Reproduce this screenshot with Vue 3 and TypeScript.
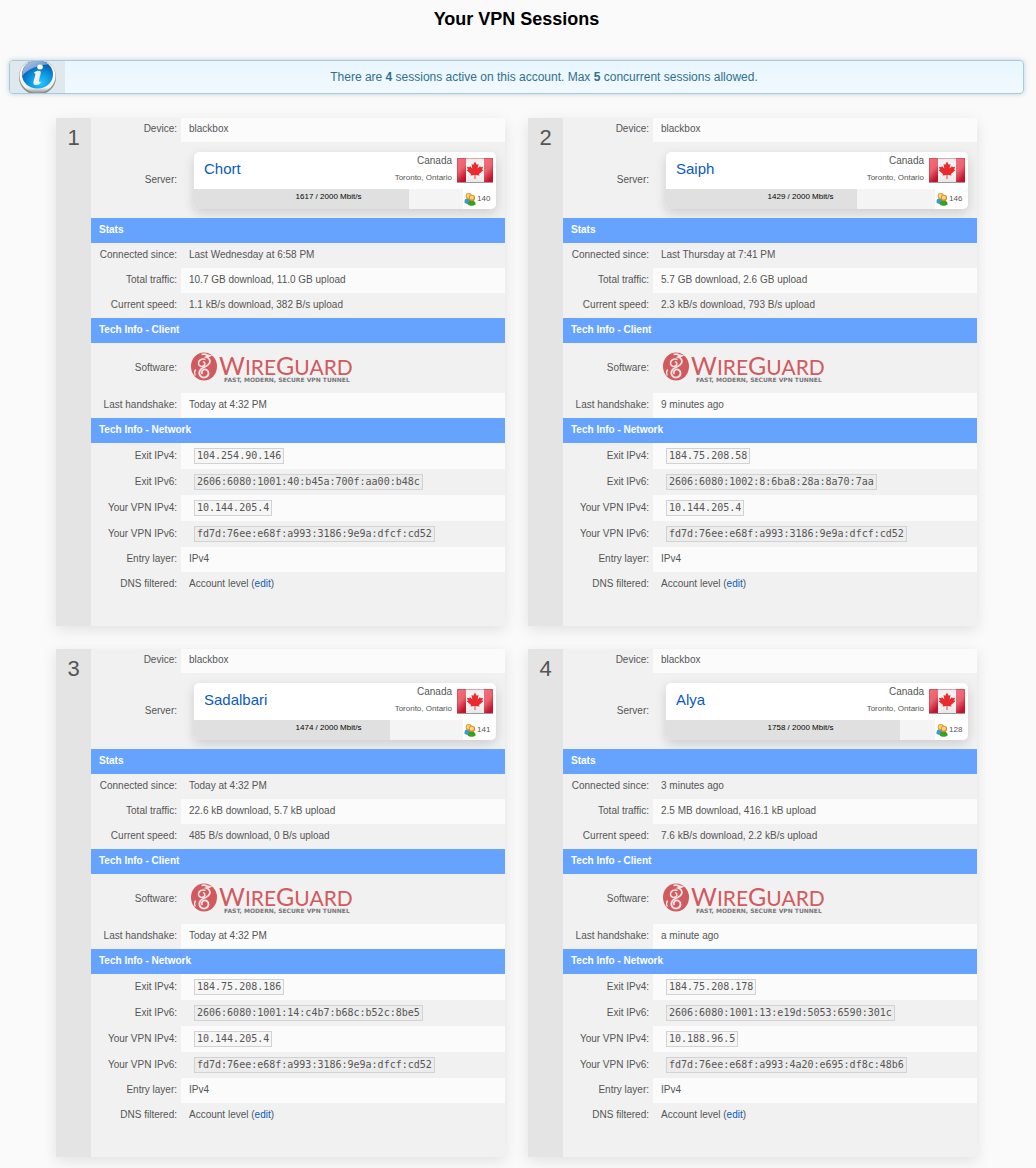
<script setup lang="ts">
interface Session {
  id: number
  server: string
  speed: number
  users: number
  connected: string
  traffic: string
  current: string
  handshake: string
  exit4: string
  exit6: string
  vpn4: string
  vpn6: string
}

const maxSpeed = 2000

const sessions: Session[] = [
  {
    id: 1, server: 'Chort', speed: 1617, users: 140,
    connected: 'Last Wednesday at 6:58 PM',
    traffic: '10.7 GB download, 11.0 GB upload',
    current: '1.1 kB/s download, 382 B/s upload',
    handshake: 'Today at 4:32 PM',
    exit4: '104.254.90.146', exit6: '2606:6080:1001:40:b45a:700f:aa00:b48c',
    vpn4: '10.144.205.4', vpn6: 'fd7d:76ee:e68f:a993:3186:9e9a:dfcf:cd52',
  },
  {
    id: 2, server: 'Saiph', speed: 1429, users: 146,
    connected: 'Last Thursday at 7:41 PM',
    traffic: '5.7 GB download, 2.6 GB upload',
    current: '2.3 kB/s download, 793 B/s upload',
    handshake: '9 minutes ago',
    exit4: '184.75.208.58', exit6: '2606:6080:1002:8:6ba8:28a:8a70:7aa',
    vpn4: '10.144.205.4', vpn6: 'fd7d:76ee:e68f:a993:3186:9e9a:dfcf:cd52',
  },
  {
    id: 3, server: 'Sadalbari', speed: 1474, users: 141,
    connected: 'Today at 4:32 PM',
    traffic: '22.6 kB download, 5.7 kB upload',
    current: '485 B/s download, 0 B/s upload',
    handshake: 'Today at 4:32 PM',
    exit4: '184.75.208.186', exit6: '2606:6080:1001:14:c4b7:b68c:b52c:8be5',
    vpn4: '10.144.205.4', vpn6: 'fd7d:76ee:e68f:a993:3186:9e9a:dfcf:cd52',
  },
  {
    id: 4, server: 'Alya', speed: 1758, users: 128,
    connected: '3 minutes ago',
    traffic: '2.5 MB download, 416.1 kB upload',
    current: '7.6 kB/s download, 2.2 kB/s upload',
    handshake: 'a minute ago',
    exit4: '184.75.208.178', exit6: '2606:6080:1001:13:e19d:5053:6590:301c',
    vpn4: '10.188.96.5', vpn6: 'fd7d:76ee:e68f:a993:4a20:e695:df8c:48b6',
  },
]

const load = (s: Session): number => Math.floor((s.speed / maxSpeed) * 100)
</script>

<template>
  <main class="page">
    <h1 class="title">Your VPN Sessions</h1>

    <div class="notice">
      <div class="notice-icon">
        <svg width="38" height="36" viewBox="0 0 38 36" aria-hidden="true">
          <defs>
            <linearGradient id="ring" x1="0" y1="0" x2="0" y2="1">
              <stop offset="0" stop-color="#c4c7ca" />
              <stop offset="0.3" stop-color="#ffffff" />
              <stop offset="0.85" stop-color="#f0f0f0" />
              <stop offset="1" stop-color="#8d8d8d" />
            </linearGradient>
            <radialGradient id="orb" cx="0.6" cy="0.8" r="0.75">
              <stop offset="0" stop-color="#22c8ff" />
              <stop offset="0.5" stop-color="#0b93e0" />
              <stop offset="1" stop-color="#0a4fa0" />
            </radialGradient>
            <linearGradient id="gloss" x1="0" y1="0" x2="1" y2="1">
              <stop offset="0" stop-color="#dfe6f2" />
              <stop offset="1" stop-color="#3c78bc" />
            </linearGradient>
          </defs>
          <ellipse cx="18.500" cy="18" rx="18.500" ry="18" fill="#8a8e90" />
          <ellipse cx="18.500" cy="17" rx="18" ry="17" fill="url(#ring)" />
          <ellipse cx="18.500" cy="15.500" rx="15.500" ry="14" fill="url(#orb)" />
          <path d="M3.300 17C2.500 8 9.500 1.500 18.500 1.500c4 0 8 1.500 10.500 4C21 6 9 9 3.300 17z" fill="url(#gloss)" opacity="0.850" />
          <ellipse cx="21" cy="8" rx="2.800" ry="2.500" fill="#fff" />
          <path d="M15 13.500c2-1.800 5-2.300 6.500-1.300 1.300 1-1.800 8-1.400 10.300.200.800 1.400 0 1.900.200-.500 2.600-5 4.300-7 2.800-2-1.700 1.700-8.500 1.300-10.700-.200-.700-1.200-.300-1.300-1.300z" fill="#f0f0f0" />
        </svg>
      </div>
      <p class="notice-text">
        There are <strong>4</strong> sessions active on this account. Max <strong>5</strong> concurrent sessions allowed.
      </p>
    </div>

    <section class="sessions">
      <article v-for="s in sessions" :key="s.id" class="card">
        <div class="number">{{ s.id }}</div>
        <table class="info">
          <tbody>
            <tr class="light device-row">
              <th scope="row">Device:</th>
              <td>blackbox</td>
            </tr>
            <tr class="server-row">
              <th scope="row">Server:</th>
              <td>
                <div class="server">
                  <div class="server-top">
                    <a href="#" class="server-name">{{ s.server }}</a>
                    <div class="place">
                      <div class="country">Canada</div>
                      <div class="city">Toronto, Ontario</div>
                    </div>
                    <svg class="flag" width="36" height="25" viewBox="0 0 36 25" role="img" aria-label="Flag of Canada">
                      <defs>
                        <linearGradient :id="'red' + s.id" x1="0" y1="0" x2="0.4" y2="1">
                          <stop offset="0" stop-color="#f4707c" />
                          <stop offset="0.55" stop-color="#ea6470" />
                          <stop offset="1" stop-color="#c4142c" />
                        </linearGradient>
                        <linearGradient :id="'white' + s.id" x1="0" y1="0" x2="0" y2="1">
                          <stop offset="0" stop-color="#ececec" />
                          <stop offset="0.5" stop-color="#fafafa" />
                          <stop offset="1" stop-color="#e8e8e8" />
                        </linearGradient>
                      </defs>
                      <rect width="36" height="24" :fill="`url(#white${s.id})`" />
                      <rect width="9" height="24" :fill="`url(#red${s.id})`" />
                      <rect x="27" width="9" height="24" :fill="`url(#red${s.id})`" />
                      <path d="M.5 24V.5h35V24" fill="none" stroke="#b82034" stroke-opacity="0.350" />
                      <path d="M0 24.500h36" stroke="#999" />
                      <path d="M18 3.500l1.700 3.300 1.800-.9-.8 4.600 2.400-2.500.5 1.300 2.500-.5-.9 2.600 1.100.8-4.300 3.700.5 1.600-4.100-.6.100 4.100h-1l.1-4.100-4.100.6.500-1.600-4.300-3.700 1.100-.8-.9-2.600 2.500.5.500-1.300 2.400 2.500-.8-4.600 1.800.9z" fill="#ea2a2e" />
                    </svg>
                  </div>
                  <div class="server-bottom">
                    <div class="bar">
                      <div class="fill" :style="{ width: load(s) + '%' }"></div>
                      <span class="bar-text">{{ s.speed }} / {{ maxSpeed }} Mbit/s</span>
                    </div>
                    <div class="users">
                      <svg width="12" height="13" viewBox="0 0 12 13" aria-hidden="true">
                        <path d="M.4 9.500C.2 6.500 2 5 4 5.300c2 .2 2.500 2 2.300 5C4 11.500 1.500 11 .4 9.500z" fill="#3a9ad8" />
                        <circle cx="4.800" cy="3.200" r="3.100" fill="#e29a2c" />
                        <circle cx="4.600" cy="3" r="2.100" fill="#fbd27c" />
                        <path d="M3.800 11.500c-.2-3 1.700-4.500 4-4.300 2.700.2 4 2 3.800 4.300-2 1.600-6 1.700-7.800 0z" fill="#38a023" />
                        <circle cx="8" cy="4.900" r="3.100" fill="#d98a24" />
                        <circle cx="7.800" cy="4.600" r="2.100" fill="#ffd880" />
                      </svg>
                      <span>{{ s.users }}</span>
                    </div>
                  </div>
                </div>
              </td>
            </tr>
            <tr class="section"><th colspan="2">Stats</th></tr>
            <tr>
              <th scope="row">Connected since:</th>
              <td>{{ s.connected }}</td>
            </tr>
            <tr class="light">
              <th scope="row">Total traffic:</th>
              <td>{{ s.traffic }}</td>
            </tr>
            <tr>
              <th scope="row">Current speed:</th>
              <td>{{ s.current }}</td>
            </tr>
            <tr class="section"><th colspan="2">Tech Info - Client</th></tr>
            <tr class="software-row">
              <th scope="row">Software:</th>
              <td>
                <svg class="wireguard" width="180" height="42" viewBox="0 -4 180 42" role="img" aria-label="WireGuard">
                  <ellipse cx="15" cy="15.500" rx="13" ry="14" fill="#d15a5e" />
                  <path d="M12.500 3.500c2.500-.8 4-.5 5.500.7l3 .6c-1.500.8-3 .7-4 1.200 2.500.8 4.300 2.600 3.800 5.200-.6 3-3.600 4-6.300 5.300-4.500 2-5.500 6.500-2.500 9 3 2.200 7.500.5 7.500-3.300 0-2.700-2.200-4.200-4.500-3.600-2.200.6-2.900 3-1.600 4.400" fill="none" stroke="#f6e4e4" stroke-width="1.800" />
                  <path d="M16.500 8.500c-4-1.200-7.200.6-7 4 .2 2.800 3.800 3.800 5.700 1.900 1.500-1.600.5-3.700-1.300-3.700M6.500 18.500c-1.200 2-1.200 4-.3 6" fill="none" stroke="#f6e4e4" stroke-width="1.500" />
                  <text class="wordmark" x="30" y="24">W<tspan class="small">IRE</tspan>G<tspan class="small">UARD</tspan></text>
                  <text class="tagline" x="35" y="31">FAST, MODERN, SECURE VPN TUNNEL</text>
                </svg>
              </td>
            </tr>
            <tr class="light">
              <th scope="row">Last handshake:</th>
              <td>{{ s.handshake }}</td>
            </tr>
            <tr class="section"><th colspan="2">Tech Info - Network</th></tr>
            <tr class="light address">
              <th scope="row">Exit IPv4:</th>
              <td><code>{{ s.exit4 }}</code></td>
            </tr>
            <tr class="address">
              <th scope="row">Exit IPv6:</th>
              <td><code>{{ s.exit6 }}</code></td>
            </tr>
            <tr class="light address">
              <th scope="row">Your VPN IPv4:</th>
              <td><code>{{ s.vpn4 }}</code></td>
            </tr>
            <tr class="address">
              <th scope="row">Your VPN IPv6:</th>
              <td><code>{{ s.vpn6 }}</code></td>
            </tr>
            <tr class="light">
              <th scope="row">Entry layer:</th>
              <td>IPv4</td>
            </tr>
            <tr>
              <th scope="row">DNS filtered:</th>
              <td>Account level (<a href="#">edit</a>)</td>
            </tr>
          </tbody>
        </table>
      </article>
    </section>
  </main>
</template>

<style>
body {
  margin: 0;
  background: #fafafa;
}
</style>

<style scoped>
.page {
  padding: 0 12px 11px 9px;
  font-family: "Liberation Sans", Arial, sans-serif;
  font-size: 10px;
  line-height: 14px;
  color: #555;
}

a {
  color: #0b5abf;
  text-decoration: none;
}

.title {
  margin: 0 0 22px;
  font-size: 18px;
  line-height: 38px;
  text-align: center;
  color: #000;
}

.notice {
  display: flex;
  overflow: hidden;
  height: 32px;
  border: 1px solid #a6cbdb;
  border-radius: 4px;
  background: linear-gradient(#e9f6fd, #f1f9ff);
  box-shadow: 0 0 5px rgba(90, 150, 175, 0.4);
}

.notice-icon {
  display: flex;
  align-items: center;
  justify-content: center;
  width: 55px;
  background: #dfe8ec;
}

.notice-icon svg {
  flex: none;
}

.notice-text {
  flex: 1;
  margin: 0;
  font-size: 12px;
  line-height: 32px;
  text-align: center;
  color: #31708f;
}

.sessions {
  display: grid;
  grid-template-columns: repeat(2, minmax(0, 1fr));
  gap: 23px;
  margin: 24px 47px 0;
}

.card {
  display: flex;
  align-items: stretch;
  background: #f1f1f1;
  box-shadow: 0 4px 14px rgba(0, 0, 0, 0.1);
}

.number {
  flex: none;
  width: 35px;
  padding-top: 6px;
  background: #e4e4e4;
  font-size: 22px;
  line-height: 28px;
  text-align: center;
}

.info {
  flex: 1;
  table-layout: fixed;
  width: 100%;
  margin-bottom: 29px;
  border-collapse: collapse;
}

.info th,
.info td {
  box-sizing: border-box;
  height: 25px;
  padding: 5px 8px;
  vertical-align: top;
}

.info th {
  width: 90px;
  padding-right: 4px;
  font-weight: normal;
  text-align: right;
  white-space: nowrap;
}

.light td {
  background: #fbfbfb;
}

.info .section th {
  background: #66a3ff;
  color: #fff;
  font-weight: bold;
  line-height: 13px;
  text-align: left;
}

.info .device-row th,
.info .device-row td {
  height: 24px;
  padding-top: 4px;
}

.info .server-row th,
.info .software-row th {
  padding-top: 0;
  padding-bottom: 1px;
  vertical-align: middle;
}

.info .server-row td {
  height: 76px;
  padding: 10px 9px 9px 13px;
}

.info .software-row td {
  height: 50px;
  padding: 4px 0 4px 8px;
}

.info .address th,
.info .address td {
  height: 26px;
  padding-top: 5px;
  padding-bottom: 5px;
}

.info .address th {
  padding-top: 6px;
}

code {
  display: inline-block;
  margin-left: 5px;
  padding: 0 2px;
  border: 1px solid #d2d2d2;
  background: rgba(0, 0, 0, 0.02);
  font-family: "DejaVu Sans Mono", monospace;
  font-size: 10px;
  line-height: 14px;
}

.server {
  overflow: hidden;
  border-radius: 5px;
  background: #fff;
  box-shadow: 0 4px 12px rgba(0, 0, 0, 0.15);
}

.server-top {
  display: flex;
  height: 37px;
  padding: 0 3px 0 10px;
}

.server-name {
  flex: 1;
  font-size: 15px;
  line-height: 34px;
}

.place {
  margin-right: 5px;
  padding-top: 1px;
  text-align: right;
}

.country {
  line-height: 16px;
}

.city {
  font-size: 8px;
  line-height: 18px;
}

.flag {
  flex: none;
  margin-top: 6px;
}

.server-bottom {
  display: flex;
  height: 20px;
  font-size: 8px;
}

.bar {
  position: relative;
  flex: 1;
  background: #f4f4f4;
  text-align: center;
  color: #000;
}

.fill {
  position: absolute;
  top: 0;
  bottom: 0;
  left: 0;
  background: #e0e0e0;
}

.bar-text {
  position: relative;
  display: block;
  line-height: 16px;
}

.users {
  display: flex;
  align-items: center;
  gap: 1px;
  box-sizing: border-box;
  width: 33px;
  padding-left: 1px;
}

.wireguard {
  display: block;
}

.wordmark {
  fill: #d15a5e;
  font-family: Lato, sans-serif;
  font-size: 25px;
}

.wordmark .small {
  font-size: 21px;
}

.tagline {
  fill: #777;
  font-family: "DejaVu Sans", sans-serif;
  font-size: 6px;
  font-weight: bold;
}

@media (max-width: 860px) {
  .sessions {
    grid-template-columns: minmax(0, 1fr);
    margin-left: 0;
    margin-right: 0;
  }
}
</style>
